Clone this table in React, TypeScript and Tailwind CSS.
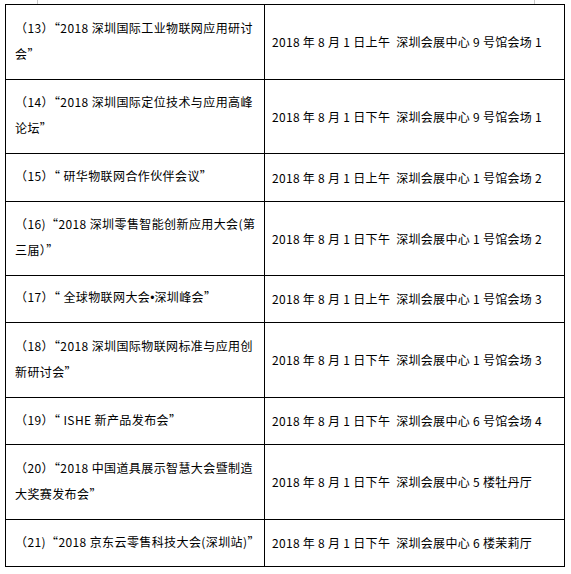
import type { ReactNode } from 'react';

const dot = <span className="font-['Liberation_Sans',sans-serif] tracking-normal">•</span>;

const rows: { left: ReactNode[]; right: string; h: string }[] = [
  { left: ['（13）“2018 深圳国际工业物联网应用研讨', '会”'], right: '2018 年 8 月 1 日上午  深圳会展中心 9 号馆会场 1', h: 'h-[75px]' },
  { left: ['（14）“2018 深圳国际定位技术与应用高峰', '论坛”'], right: '2018 年 8 月 1 日下午  深圳会展中心 9 号馆会场 1', h: 'h-[74px]' },
  { left: ['（15）“ 研华物联网合作伙伴会议”'], right: '2018 年 8 月 1 日上午  深圳会展中心 1 号馆会场 2', h: 'h-[48px]' },
  { left: ['（16)“2018 深圳零售智能创新应用大会(第', '三届）”'], right: '2018 年 8 月 1 日下午  深圳会展中心 1 号馆会场 2', h: 'h-[74px]' },
  { left: [<>（17）“ 全球物联网大会{dot}深圳峰会”</>], right: '2018 年 8 月 1 日上午  深圳会展中心 1 号馆会场 3', h: 'h-[47px]' },
  { left: ['（18）“2018 深圳国际物联网标准与应用创', '新研讨会”'], right: '2018 年 8 月 1 日下午  深圳会展中心 1 号馆会场 3', h: 'h-[75px]' },
  { left: ['（19）“ ISHE 新产品发布会”'], right: '2018 年 8 月 1 日下午  深圳会展中心 6 号馆会场 4', h: 'h-[47px]' },
  { left: ['（20）“2018 中国道具展示智慧大会暨制造', '大奖赛发布会”'], right: '2018 年 8 月 1 日下午  深圳会展中心 5 楼牡丹厅', h: 'h-[75px]' },
  { left: ['（21)“2018 京东云零售科技大会(深圳站)”'], right: '2018 年 8 月 1 日下午  深圳会展中心 6 楼茉莉厅', h: 'h-[47px]' },
];

export default function App() {
  return (
    <div className="w-[571px] h-[574px] bg-white text-black text-[12px] font-['Noto_Sans_CJK_SC',sans-serif]">
      {/* corner marks */}
      <div className="flex h-[4px]">
        <div className="ml-[37px] w-px h-full bg-[#c8c8c8]" />
        <div className="ml-[496px] w-px h-full bg-[#c8c8c8]" />
      </div>

      <div className="ml-[5px] w-[560px] border border-b-0 border-black">
        {rows.map((r, i) => (
          <div key={i} className={`flex border-b border-black ${r.h}`}>
            <div className="w-[259px] shrink-0 border-r border-black flex items-center pl-[9px] pb-[3px]">
              <div className="leading-[26px] whitespace-pre tracking-[0.4px]">
                {r.left.map((l, j) => (
                  <div key={j}>{l}</div>
                ))}
              </div>
            </div>
            <div className="flex-1 flex items-center pl-[7px] whitespace-pre tracking-[0.3px]">
              {r.right}
            </div>
          </div>
        ))}
      </div>
    </div>
  );
}
